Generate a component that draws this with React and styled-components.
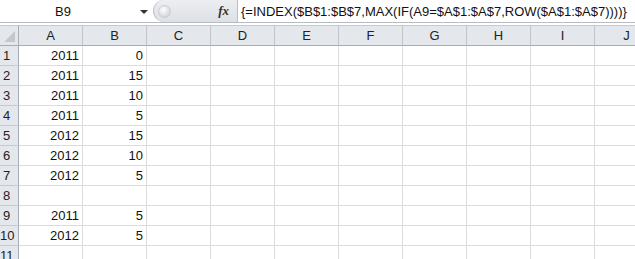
import styled, {createGlobalStyle} from 'styled-components';

const GlobalStyle = createGlobalStyle`
  body {
    margin: 0;
    background: #fff;
    overflow: hidden;
    font-family: "Liberation Sans", Arial, sans-serif;
  }
`;

const Page = styled.div`
  width: 635px;
  height: 259px;
  overflow: hidden;
  background: #fff;
`;

const FormulaBar = styled.div`
  display: flex;
  height: 22px;
  border-bottom: 1px solid #b7bcc3;
  box-sizing: content-box;
`;

const NameBox = styled.div`
  position: relative;
  width: 153px;
  display: flex;
  align-items: center;
  padding-left: 55px;
  box-sizing: border-box;
  font-size: 13px;
  color: #111;
`;

const DropArrow = styled.span`
  position: absolute;
  left: 140px;
  top: 10px;
  width: 0;
  height: 0;
  border-left: 4px solid transparent;
  border-right: 4px solid transparent;
  border-top: 4px solid #333;
`;

const Splitter = styled.div`
  width: 84px;
  display: flex;
  align-items: center;
  justify-content: space-between;
  padding: 0 8px 0 4px;
  box-sizing: border-box;
  background: linear-gradient(#eceef1, #dde0e5);
  border-radius: 11px 0 0 11px;
  border-left: 1px solid #b9bec5;
`;

const Knob = styled.span`
  width: 11px;
  height: 11px;
  border-radius: 50%;
  background: radial-gradient(circle at 40% 35%, #ffffff, #c3c7cd);
  border: 1px solid #c9cdd3;
`;

const Fx = styled.span`
  font-family: "Liberation Serif", serif;
  font-style: italic;
  font-weight: bold;
  font-size: 13px;
  color: #333;
`;

const FormulaInput = styled.div`
  flex: 1;
  display: flex;
  align-items: center;
  padding-left: 3px;
  border-left: 1px solid #b9bec5;
  font-size: 13px;
  color: #111;
  white-space: nowrap;
  overflow: hidden;
`;

const Gap = styled.div`
  height: 2px;
`;

const Sheet = styled.div`
  display: grid;
  grid-template-columns: 19px repeat(10, 64px);
  grid-auto-rows: 20px;
  grid-template-rows: 21px;
`;

const Corner = styled.div`
  position: relative;
  background: #e4e7eb;
  border-right: 1px solid #a9adb3;
  border-bottom: 1px solid #a9adb3;
  border-top: 1px solid #c6cacf;
  box-sizing: border-box;
  &::after {
    content: "";
    position: absolute;
    right: 3px;
    bottom: 3px;
    width: 0;
    height: 0;
    border-left: 11px solid transparent;
    border-bottom: 11px solid #c4c8cd;
  }
`;

const ColHead = styled.div`
  background: #e4e7eb;
  border-top: 1px solid #c6cacf;
  border-right: 1px solid #c1c5cb;
  border-bottom: 1px solid #a9adb3;
  box-sizing: border-box;
  display: flex;
  align-items: center;
  justify-content: center;
  font-size: 13px;
  color: #222;
`;

const RowHead = styled.div`
  background: #e4e7eb;
  border-right: 1px solid #a9adb3;
  border-bottom: 1px solid #c6cacf;
  box-sizing: border-box;
  display: flex;
  align-items: center;
  padding-left: ${p => (p.$wide ? 0 : 3)}px;
  font-size: 13px;
  color: #222;
  overflow: hidden;
`;

const Cell = styled.div`
  border-right: 1px solid #dadcdd;
  border-bottom: 1px solid #dadcdd;
  box-sizing: border-box;
  display: flex;
  align-items: center;
  justify-content: flex-end;
  padding-right: 3px;
  font-size: 13px;
  color: #111;
`;

const cols = ['A', 'B', 'C', 'D', 'E', 'F', 'G', 'H', 'I', 'J'];

const data = [
  ['2011', '0'],
  ['2011', '15'],
  ['2011', '10'],
  ['2011', '5'],
  ['2012', '15'],
  ['2012', '10'],
  ['2012', '5'],
  ['', ''],
  ['2011', '5'],
  ['2012', '5'],
  ['', ''],
];

const App = () => {
  return (
    <Page>
      <GlobalStyle />
      <FormulaBar>
        <NameBox>
          B9
          <DropArrow />
        </NameBox>
        <Splitter>
          <Knob />
          <Fx>fx</Fx>
        </Splitter>
        <FormulaInput>{'{=INDEX($B$1:$B$7,MAX(IF(A9=$A$1:$A$7,ROW($A$1:$A$7))))}'}</FormulaInput>
      </FormulaBar>
      <Gap />
      <Sheet>
        <Corner />
        {cols.map(c => (
          <ColHead key={c}>{c}</ColHead>
        ))}
        {data.map((row, i) => [
          <RowHead key={'h' + i} $wide={i >= 9}>{i + 1}</RowHead>,
          ...cols.map((c, j) => <Cell key={c + i}>{row[j] || ''}</Cell>),
        ])}
      </Sheet>
    </Page>
  );
};

export default App;
